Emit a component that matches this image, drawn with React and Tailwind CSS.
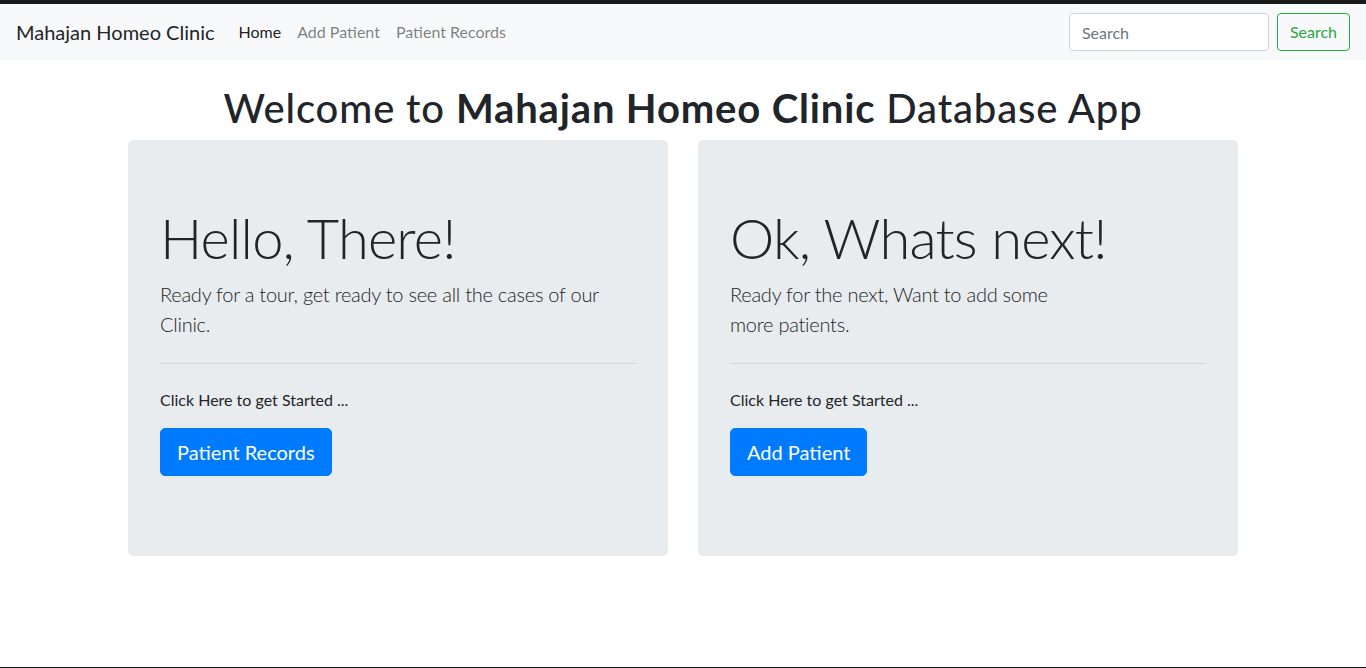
import React from "react";

const font = { fontFamily: 'Lato, "Open Sans", sans-serif' };

const Jumbo = ({ title, lead, button }) => (
  <div className="bg-[#e9ecef] rounded-[5px] px-8 py-16">
    <h1 className="text-[56px] leading-[67px] font-light text-[#212529] mb-2 tracking-[-0.8px]">
      {title}
    </h1>
    <p className="text-[20px] leading-[30px] font-light text-[#212529] mb-4 tracking-[-0.25px]">{lead}</p>
    <hr className="mt-6 mb-6 border-0 border-t border-black/10" />
    <p className="text-[16px] leading-6 text-[#212529] mb-4">Click Here to get Started ...</p>
    <p className="mb-4">
      <a
        href="#"
        className="inline-block bg-[#007bff] border border-[#007bff] text-white text-[20px] leading-[30px] px-4 py-2 rounded-[5px]"
      >
        {button}
      </a>
    </p>
  </div>
);

export default function App() {
  return (
    <div className="min-h-[668px] bg-white flex flex-col" style={font}>
      <div className="h-1 bg-[#1a1a1a]" />
      <nav className="h-14 bg-[#f8f9fa] flex items-center px-4">
        <a href="#" className="text-[20px] text-[#212529] mr-4 leading-[30px]">
          Mahajan Homeo Clinic
        </a>
        <div className="flex items-center text-[16px] leading-6">
          <a href="#" className="px-2 text-black/90">Home</a>
          <a href="#" className="px-2 text-black/50">Add Patient</a>
          <a href="#" className="px-2 text-black/50">Patient Records</a>
        </div>
        <div className="ml-auto flex items-center">
          <input
            placeholder="Search"
            className="w-[200px] h-[38px] px-3 text-[16px] bg-white border border-[#ced4da] rounded-[4px] mr-2 placeholder:text-[#6c757d] outline-none"
          />
          <button className="h-[38px] px-3 text-[16px] text-[#28a745] border border-[#28a745] rounded-[4px]">
            Search
          </button>
        </div>
      </nav>
      <h1 className="text-center text-[40px] leading-[48px] font-medium text-[#212529] mt-6 mb-2 tracking-[0.85px]">
        Welcome to <b className="font-bold">Mahajan Homeo Clinic</b> Database App
      </h1>
      <div className="w-[1140px] mx-auto grid grid-cols-2">
        <div className="px-[15px]">
          <Jumbo
            title="Hello, There!"
            lead="Ready for a tour, get ready to see all the cases of our Clinic."
            button="Patient Records"
          />
        </div>
        <div className="px-[15px]">
          <Jumbo
            title="Ok, Whats next!"
            lead={
              <>
                Ready for the next, Want to add some
                <br />
                more patients.
              </>
            }
            button="Add Patient"
          />
        </div>
      </div>
      <div className="mt-auto h-px bg-[#1a1a1a]" />
    </div>
  );
}
